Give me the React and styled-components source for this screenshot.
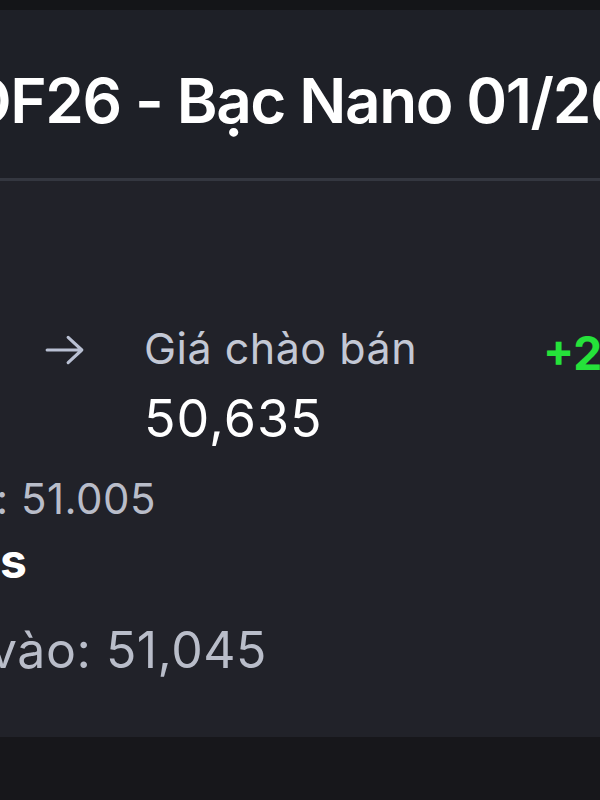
import React from 'react';
import styled, { createGlobalStyle } from 'styled-components';

const GlobalStyle = createGlobalStyle`
  html, body {
    margin: 0;
    padding: 0;
    background: #17171b;
  }
  body {
    font-family: Inter, "Noto Sans", "Liberation Sans", sans-serif;
  }
`;

const App = () => {
  return (
    <Screen>
      <GlobalStyle />
      <TopStrip />
      <Header>
        <Title>OF26 - Bạc Nano 01/2026</Title>
      </Header>
      <Divider />
      <Body>
        <QuoteRow>
          <Arrow viewBox="0 0 40 32" aria-hidden="true">
            <path d="M3 16 H36 M23 4 L36 16 L23 28" />
          </Arrow>
          <PriceBlock>
            <Label>Giá chào bán</Label>
            <Price>50,635</Price>
          </PriceBlock>
          <Change>+2,15%</Change>
        </QuoteRow>
        <InfoLine size={42} shift={-4} top={25}>: 51.005</InfoLine>
        <SectionTitle>s</SectionTitle>
        <InfoLine size={50} shift={-11} top={30}>vào: 51,045</InfoLine>
      </Body>
      <Footer />
    </Screen>
  );
};

const Screen = styled.div`
  width: 600px;
  height: 800px;
  overflow: hidden;
  display: flex;
  flex-direction: column;
  background: #17171b;
`;

const TopStrip = styled.div`
  height: 10px;
  flex: none;
  background: #141518;
`;

const Header = styled.div`
  height: 168px;
  flex: none;
  display: flex;
  align-items: center;
  padding-top: 14px;
  box-sizing: border-box;
  background: #1e2027;
  overflow: hidden;
`;

const Title = styled.h1`
  margin: 0 0 0 -36px;
  font-size: 62px;
  font-weight: 600;
  line-height: 1;
  letter-spacing: -1.4px;
  color: #ffffff;
  white-space: nowrap;
`;

const Divider = styled.div`
  height: 3px;
  flex: none;
  background: #343740;
`;

const Body = styled.div`
  height: 556px;
  flex: none;
  display: flex;
  flex-direction: column;
  padding-top: 142px;
  box-sizing: border-box;
  background: #212229;
  overflow: hidden;
`;

const QuoteRow = styled.div`
  display: flex;
  align-items: flex-start;
`;

const Arrow = styled.svg`
  width: 42px;
  height: 34px;
  margin: 10px 58px 0 44px;
  flex: none;
  fill: none;
  stroke: #b9c0d3;
  stroke-width: 3;
  stroke-linecap: round;
  stroke-linejoin: round;
`;

const PriceBlock = styled.div`
  display: flex;
  flex-direction: column;
  gap: 16px;
`;

const Label = styled.div`
  font-size: 43px;
  line-height: 50px;
  letter-spacing: 0.5px;
  color: #c3c8d5;
  white-space: nowrap;
`;

const Price = styled.div`
  font-size: 52px;
  line-height: 60px;
  color: #ffffff;
  letter-spacing: 1px;
`;

const Change = styled.div`
  margin-left: auto;
  width: 57px;
  flex: none;
  font-size: 46px;
  line-height: 48px;
  font-weight: 700;
  color: #25e23a;
  white-space: nowrap;
  margin-top: 6px;
`;

const InfoLine = styled.div`
  margin: ${props => props.top || 30}px 0 0 ${props => props.shift || 0}px;
  font-size: ${props => props.size}px;
  line-height: 1.2;
  letter-spacing: 0.5px;
  color: #b9bdc9;
  white-space: nowrap;
`;

const SectionTitle = styled.div`
  margin-top: 8px;
  font-size: 48px;
  font-weight: 700;
  line-height: 1.2;
  color: #ffffff;
`;

const Footer = styled.div`
  flex: 1;
  background: #17171b;
`;

export default App;
